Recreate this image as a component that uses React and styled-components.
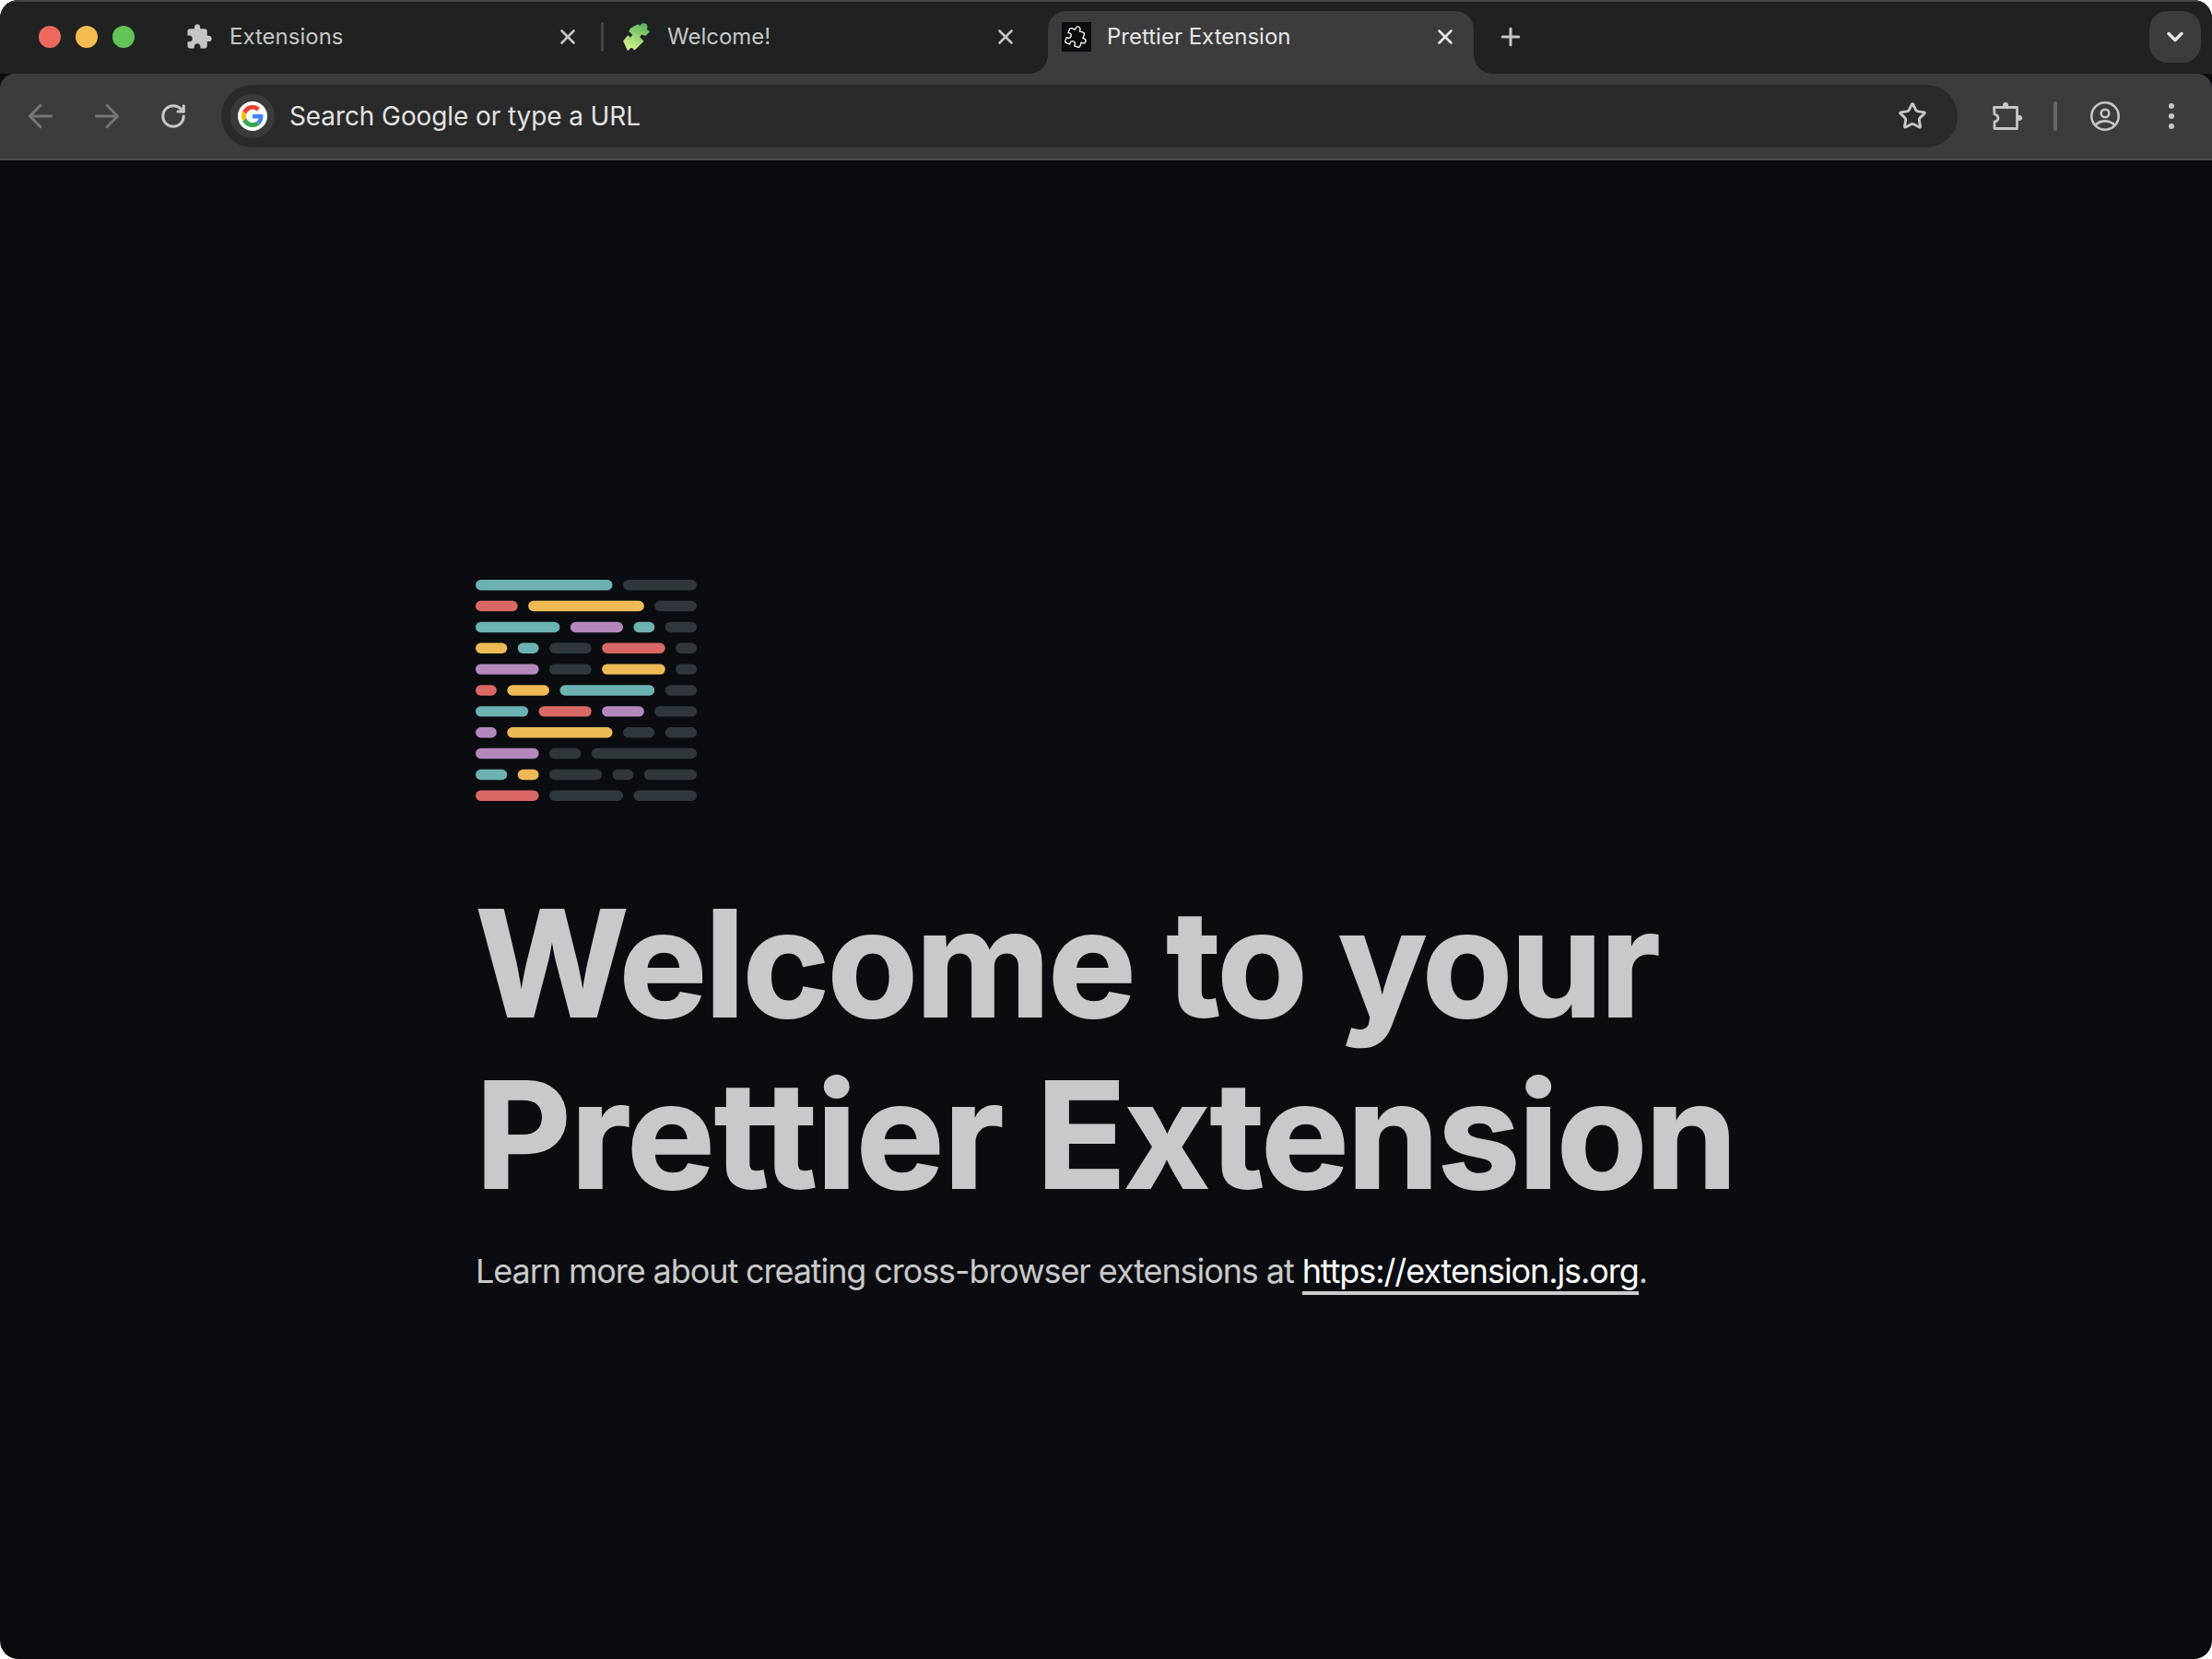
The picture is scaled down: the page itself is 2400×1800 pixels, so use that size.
import styled, { createGlobalStyle } from "styled-components";
import { LuArrowLeft, LuArrowRight, LuRotateCw, LuStar, LuChevronDown, LuPlus, LuX } from "react-icons/lu";

const GlobalStyle = createGlobalStyle`
  html, body {
    margin: 0;
    padding: 0;
    background: #fff;
  }
`;

const Browser = styled.div`
  width: 2400px;
  height: 1800px;
  display: flex;
  flex-direction: column;
  background: #0a0c10;
  border-radius: 20px;
  overflow: hidden;
  font-family: Inter, "Liberation Sans", sans-serif;
`;

const TabStrip = styled.div`
  height: 80px;
  box-sizing: border-box;
  flex-shrink: 0;
  display: flex;
  align-items: flex-start;
  padding: 10px 12px 0 42px;
  background: #202222;
  border-top: 2px solid #454646;
`;

const Lights = styled.div`
  display: flex;
  gap: 16px;
  margin: 16px 39px 0 0;
`;

const Light = styled.span`
  width: 24px;
  height: 24px;
  border-radius: 50%;
  background: ${(p) => p.$color};
`;

const Tab = styled.div`
  position: relative;
  width: 462px;
  height: 68px;
  box-sizing: border-box;
  flex-shrink: 0;
  display: flex;
  align-items: flex-start;
  padding: 12px 18px 0 15px;
  gap: 17px;
  margin-left: ${(p) => (p.$active ? "15px" : "0")};
  border-radius: 20px 20px 0 0;
  font-size: 24px;
  line-height: 32px;
  background: ${(p) => (p.$active ? "#3c3c3c" : "transparent")};
  color: ${(p) => (p.$active ? "#e6e6e6" : "#c4c6c6")};

  /* the concave flares at the foot of the active tab */
  &::before,
  &::after {
    content: "";
    display: ${(p) => (p.$active ? "block" : "none")};
    position: absolute;
    bottom: 0;
    width: 20px;
    height: 20px;
  }
  &::before {
    left: -20px;
    background: radial-gradient(circle at 0 0, transparent 19.5px, #3c3c3c 20px);
  }
  &::after {
    right: -20px;
    background: radial-gradient(circle at 100% 0, transparent 19.5px, #3c3c3c 20px);
  }
`;

const TabIcon = styled.span`
  width: 32px;
  height: 32px;
  flex-shrink: 0;
  display: flex;
  align-items: center;
  justify-content: center;
  background: ${(p) => (p.$boxed ? "#0a0c10" : "transparent")};
`;

const TabTitle = styled.span`
  flex: 1;
  white-space: nowrap;
`;

const TabClose = styled.span`
  height: 32px;
  display: flex;
  align-items: center;
  color: inherit;
`;

const TabDivider = styled.span`
  width: 3px;
  height: 32px;
  margin: 12px 5px 0 5px;
  flex-shrink: 0;
  background: #454646;
  border-radius: 2px;
`;

const NewTab = styled.button`
  width: 56px;
  height: 56px;
  margin-left: 12px;
  padding: 0;
  display: flex;
  align-items: center;
  justify-content: center;
  border: 0;
  background: transparent;
  color: #c7c7c7;
`;

const TabSearch = styled.button`
  width: 56px;
  height: 56px;
  margin-left: auto;
  padding: 0;
  display: flex;
  align-items: center;
  justify-content: center;
  border: 0;
  border-radius: 20px;
  background: #3c3c3c;
  color: #e3e3e3;
`;

const Toolbar = styled.div`
  height: 94px;
  box-sizing: border-box;
  flex-shrink: 0;
  display: flex;
  align-items: flex-start;
  padding: 12px 0 0 32px;
  background: #3c3c3c;
  border-bottom: 2px solid #4a4a4a;
  border-radius: 16px 16px 0 0;
`;

const NavButton = styled.span`
  width: 24px;
  height: 68px;
  margin-right: ${(p) => p.$gap}px;
  display: flex;
  align-items: center;
  justify-content: center;
  color: ${(p) => (p.$muted ? "#777777" : "#c7c7c7")};

  svg {
    flex-shrink: 0;
  }
`;

const Omnibox = styled.div`
  width: 1884px;
  height: 68px;
  flex-shrink: 0;
  box-sizing: border-box;
  display: flex;
  align-items: center;
  padding: 0 16px 0 10px;
  border-radius: 34px;
  background: #2a2a2a;
  color: #e3e3e3;
  font-size: 28px;
  letter-spacing: -0.1px;
`;

const GoogleBadge = styled.span`
  width: 48px;
  height: 48px;
  margin-right: 16px;
  display: flex;
  align-items: center;
  justify-content: center;
  border-radius: 50%;
  background: #3a3a3a;
`;

const GoogleDisc = styled.span`
  width: 32px;
  height: 32px;
  display: flex;
  align-items: center;
  justify-content: center;
  border-radius: 50%;
  background: #fff;
`;

const OmniText = styled.span`
  flex: 1;
`;

const StarSlot = styled.span`
  display: flex;
  margin-right: 17px;
  color: #c7c7c7;
`;

const ToolActions = styled.div`
  height: 68px;
  display: flex;
  align-items: center;
  margin-left: 38px;
  color: #c7c7c7;
`;

const ToolDivider = styled.span`
  width: 4px;
  height: 32px;
  margin: 0 36px 0 34px;
  border-radius: 2px;
  background: #666;
`;

const Dots = styled.span`
  display: flex;
  flex-direction: column;
  gap: 5px;
  margin-left: 53px;
`;

const Dot = styled.span`
  width: 6px;
  height: 6px;
  border-radius: 50%;
  background: #c7c7c7;
`;

const Content = styled.main`
  width: 1368px;
  margin: 0 auto;
  padding-top: 455px;
`;

const Logo = styled.svg`
  display: block;
  width: 240px;
  height: 240px;
`;

const Heading = styled.h1`
  margin: 83px 0 0;
  font-size: 160px;
  line-height: 186px;
  font-weight: 700;
  letter-spacing: -2.3px;
  white-space: nowrap;
  font-variant-ligatures: none;
  font-feature-settings: "calt" 0;
  -webkit-text-stroke: 2px #c9c9c9;
  color: #c9c9c9;
`;

const HeadingWord = styled.span`
  letter-spacing: ${(p) => p.$spacing}px;
`;

const Lead = styled.p`
  margin: 31px 0 0;
  font-size: 36px;
  line-height: 48px;
  letter-spacing: -1.09px;
  color: #c9c9c9;
`;

const Link = styled.a`
  color: #fff;
  text-decoration: none;
  border-bottom: 4px solid #ccc;
`;

const PUZZLE =
  "M20.5 11H19V7c0-1.1-.9-2-2-2h-4V3.5C13 2.12 11.88 1 10.5 1S8 2.12 8 3.5V5H4c-1.1 0-1.99.9-1.99 2v3.8H3.5c1.49 0 2.7 1.21 2.7 2.7s-1.21 2.7-2.7 2.7H2V20c0 1.1.9 2 2 2h3.8v-1.5c0-1.49 1.21-2.7 2.7-2.7 1.49 0 2.7 1.21 2.7 2.7V22H17c1.1 0 2-.9 2-2v-4h1.5c1.38 0 2.5-1.12 2.5-2.5S21.88 11 20.5 11z";

const T = "#6cb2b2";
const R = "#d96865";
const Y = "#edba56";
const P = "#b488bd";
const G = "#2f373d";

// each row is [colour, length] pairs on a 21 unit grid, with a 1 unit gap between bars
const LOGO_ROWS = [
  [[T, 13], [G, 7]],
  [[R, 4], [Y, 11], [G, 4]],
  [[T, 8], [P, 5], [T, 2], [G, 3]],
  [[Y, 3], [T, 2], [G, 4], [R, 6], [G, 2]],
  [[P, 6], [G, 4], [Y, 6], [G, 2]],
  [[R, 2], [Y, 4], [T, 9], [G, 3]],
  [[T, 5], [R, 5], [P, 4], [G, 4]],
  [[P, 2], [Y, 10], [G, 3], [G, 3]],
  [[P, 6], [G, 3], [G, 10]],
  [[T, 3], [Y, 2], [G, 5], [G, 2], [G, 5]],
  [[R, 6], [G, 7], [G, 6]],
];

function LogoMark() {
  return (
    <Logo viewBox="0 0 21 21">
      {LOGO_ROWS.map((row, rowIndex) => {
        let x = 0;
        return row.map(([color, length], barIndex) => {
          const bar = (
            <rect key={`${rowIndex}-${barIndex}`} x={x} y={rowIndex * 2} width={length} height={1} rx={0.5} fill={color} />
          );
          x += length + 1;
          return bar;
        });
      })}
    </Logo>
  );
}

function GoogleIcon() {
  return (
    <svg width="24" height="24" viewBox="0 0 48 48">
      <path fill="#EA4335" d="M24 9.5c3.5 0 6.7 1.2 9.2 3.6l6.9-6.9C35.9 2.4 30.5 0 24 0 14.6 0 6.5 5.4 2.6 13.2l8 6.2C12.5 13.7 17.8 9.5 24 9.5z" />
      <path fill="#4285F4" d="M46.9 24.5c0-1.6-.1-3.1-.4-4.500H24v9h12.900c-.6 3-2.200 5.500-4.700 7.200l7.700 6c4.500-4.200 7-10.300 7-17.700z" />
      <path fill="#FBBC05" d="M10.600 28.600c-.5-1.400-.8-3-.8-4.600s.3-3.200.8-4.600l-8-6.200C.9 16.500 0 20.100 0 24s.9 7.500 2.600 10.800l8-6.200z" />
      <path fill="#34A853" d="M24 48c6.500 0 11.900-2.100 15.900-5.800l-7.700-6c-2.200 1.500-4.900 2.300-8.200 2.300-6.200 0-11.500-4.200-13.400-9.900l-8 6.200C6.500 42.600 14.600 48 24 48z" />
    </svg>
  );
}

function WelcomeIcon() {
  return (
    <svg width="30" height="30" viewBox="0 0 28 28">
      <defs>
        <linearGradient id="welcomeGreen" gradientUnits="userSpaceOnUse" x1="20" y1="2" x2="8" y2="27">
          <stop offset="0" stopColor="#5fb85f" />
          <stop offset="1" stopColor="#d6f08a" />
        </linearGradient>
      </defs>
      <g fill="url(#welcomeGreen)" stroke="url(#welcomeGreen)" strokeWidth="1.5" strokeLinejoin="round">
        <circle cx="21" cy="4" r="3" />
        <path d="M8.300 5.500 15 2 20 5 26 8.500 22.700 12 18.300 11 16 14.300 20 18.300 11.700 26.500 8.300 23.300 5 27 1 18.300 5 13.300 7.700 15.700 10.700 11.700 6.700 8.300z" />
      </g>
    </svg>
  );
}

function ExtensionsToolIcon() {
  return (
    <svg width="32" height="32" viewBox="0 0 32 32" fill="none" stroke="#c7c7c7" strokeWidth="2.8" strokeLinejoin="round">
      <circle cx="14" cy="4" r="3" fill="#c7c7c7" stroke="none" />
      <circle cx="29" cy="18" r="3" fill="#c7c7c7" stroke="none" />
      <path d="M1.500 6.500H26.500V29.500H2V22c2.500-.5 4-2.200 4-4s-1.500-3.500-4-4z" />
    </svg>
  );
}

function ProfileIcon() {
  return (
    <svg width="32" height="32" viewBox="0 0 32 32" fill="none" stroke="#c7c7c7" strokeWidth="2.6">
      <circle cx="16" cy="16" r="14.7" />
      <circle cx="16" cy="13" r="4.3" />
      <path d="M5.500 25.500c6-5.500 15-5.500 21 0" />
    </svg>
  );
}

export default function App() {
  return (
    <>
      <GlobalStyle />
      <Browser>
        <TabStrip>
          <Lights>
            <Light $color="#ee6a5f" />
            <Light $color="#f5bd4f" />
            <Light $color="#61c454" />
          </Lights>
          <Tab>
            <TabIcon>
              <svg width="30" height="30" viewBox="0 0 24 24" fill="#c4c6c6">
                <path d={PUZZLE} />
              </svg>
            </TabIcon>
            <TabTitle>Extensions</TabTitle>
            <TabClose><LuX size={26} strokeWidth={2.4} /></TabClose>
          </Tab>
          <TabDivider />
          <Tab>
            <TabIcon><WelcomeIcon /></TabIcon>
            <TabTitle>Welcome!</TabTitle>
            <TabClose><LuX size={26} strokeWidth={2.4} /></TabClose>
          </Tab>
          <Tab $active>
            <TabIcon $boxed>
              <svg width="30" height="30" viewBox="0 0 24 24" fill="none" stroke="#fff" strokeWidth="1.3">
                <path d={PUZZLE} transform="rotate(20 12 12) translate(2.400 2.400) scale(0.8)" />
              </svg>
            </TabIcon>
            <TabTitle>Prettier Extension</TabTitle>
            <TabClose><LuX size={26} strokeWidth={2.4} /></TabClose>
          </Tab>
          <NewTab><LuPlus size={30} strokeWidth={2.4} /></NewTab>
          <TabSearch><LuChevronDown size={28} strokeWidth={3} /></TabSearch>
        </TabStrip>
        <Toolbar>
          <NavButton $muted $gap={48}><LuArrowLeft size={40} strokeWidth={1.7} /></NavButton>
          <NavButton $muted $gap={48}><LuArrowRight size={40} strokeWidth={1.7} /></NavButton>
          <NavButton $gap={40}><LuRotateCw size={30} strokeWidth={2.4} /></NavButton>
          <Omnibox>
            <GoogleBadge>
              <GoogleDisc><GoogleIcon /></GoogleDisc>
            </GoogleBadge>
            <OmniText>Search Google or type a URL</OmniText>
            <StarSlot><LuStar size={32} strokeWidth={2.2} /></StarSlot>
          </Omnibox>
          <ToolActions>
            <ExtensionsToolIcon />
            <ToolDivider />
            <ProfileIcon />
            <Dots>
              <Dot />
              <Dot />
              <Dot />
            </Dots>
          </ToolActions>
        </Toolbar>
        <Content>
          <LogoMark />
          <Heading>
            Welcome to your
            <br />
            <HeadingWord $spacing={-0.35}>Prettier</HeadingWord> <HeadingWord $spacing={-1.8}>Extension</HeadingWord>
          </Heading>
          <Lead>
            Learn more about creating cross-browser extensions at{" "}
            <Link href="https://extension.js.org">https://extension.js.org</Link>.
          </Lead>
        </Content>
      </Browser>
    </>
  );
}
